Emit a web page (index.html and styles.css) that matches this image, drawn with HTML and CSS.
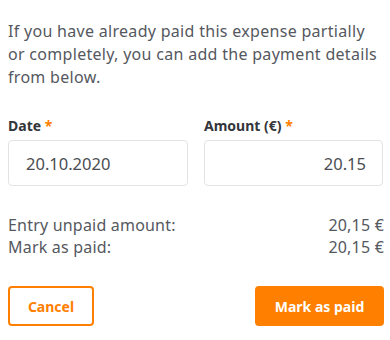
FILE: index.html
```html
<!DOCTYPE html>
<html lang="en">
<head>
<meta charset="utf-8">
<link rel="stylesheet" href="styles.css">
</head>
<body>
<div class="panel">
  <p class="intro">If you have already paid this expense partially or completely, you can add the payment details from below.</p>
  <div class="fields">
    <div class="field">
      <label class="label">Date <span class="req">*</span></label>
      <div class="input">20.10.2020</div>
    </div>
    <div class="field">
      <label class="label">Amount (€) <span class="req">*</span></label>
      <div class="input input-right">20.15</div>
    </div>
  </div>
  <div class="summary">
    <div class="row"><span>Entry unpaid amount:</span><span>20,15 €</span></div>
    <div class="row"><span>Mark as paid:</span><span>20,15 €</span></div>
  </div>
  <div class="actions">
    <button class="btn btn-outline">Cancel</button>
    <button class="btn btn-primary">Mark as paid</button>
  </div>
</div>
</body>
</html>
```
FILE: styles.css
```css
html, body {
  margin: 0;
  background: #ffffff;
}
body {
  padding: 8px;
  font-family: "Noto Sans", "DejaVu Sans", sans-serif;
  color: #55585e;
}
.panel {
  width: 376px;
}
.intro {
  margin: 12px 0 0;
  font-size: 16px;
  line-height: 23px;
  letter-spacing: 0.3px;
  color: #55585e;
}
.fields {
  margin-top: 28px;
  display: grid;
  grid-template-columns: 180px 179px;
  column-gap: 16px;
}
.field {
  display: flex;
  flex-direction: column;
}
.label {
  font-size: 14px;
  font-weight: 700;
  line-height: 18px;
  color: #33363b;
  margin-bottom: 5px;
}
.req {
  color: #ff8000;
}
.input {
  box-sizing: border-box;
  height: 46px;
  border: 1px solid #e3e3e3;
  border-radius: 4px;
  padding: 0 16px 0 17px;
  display: flex;
  align-items: center;
  font-size: 16.5px;
  color: #4a4d52;
}
.input-right {
  justify-content: flex-end;
}
.summary {
  margin-top: 28px;
  font-size: 16px;
  line-height: 22px;
  letter-spacing: 0.2px;
}
.row {
  display: flex;
  justify-content: space-between;
}
.actions {
  margin-top: 28px;
  display: flex;
  justify-content: space-between;
}
.btn {
  box-sizing: border-box;
  height: 40px;
  border-radius: 4px;
  font-family: inherit;
  font-size: 14px;
  font-weight: 700;
  cursor: pointer;
}
.btn-outline {
  width: 86px;
  background: #ffffff;
  border: 2px solid #ff8000;
  color: #ff8000;
}
.btn-primary {
  width: 129px;
  background: #ff8000;
  border: none;
  color: #ffffff;
}
```
